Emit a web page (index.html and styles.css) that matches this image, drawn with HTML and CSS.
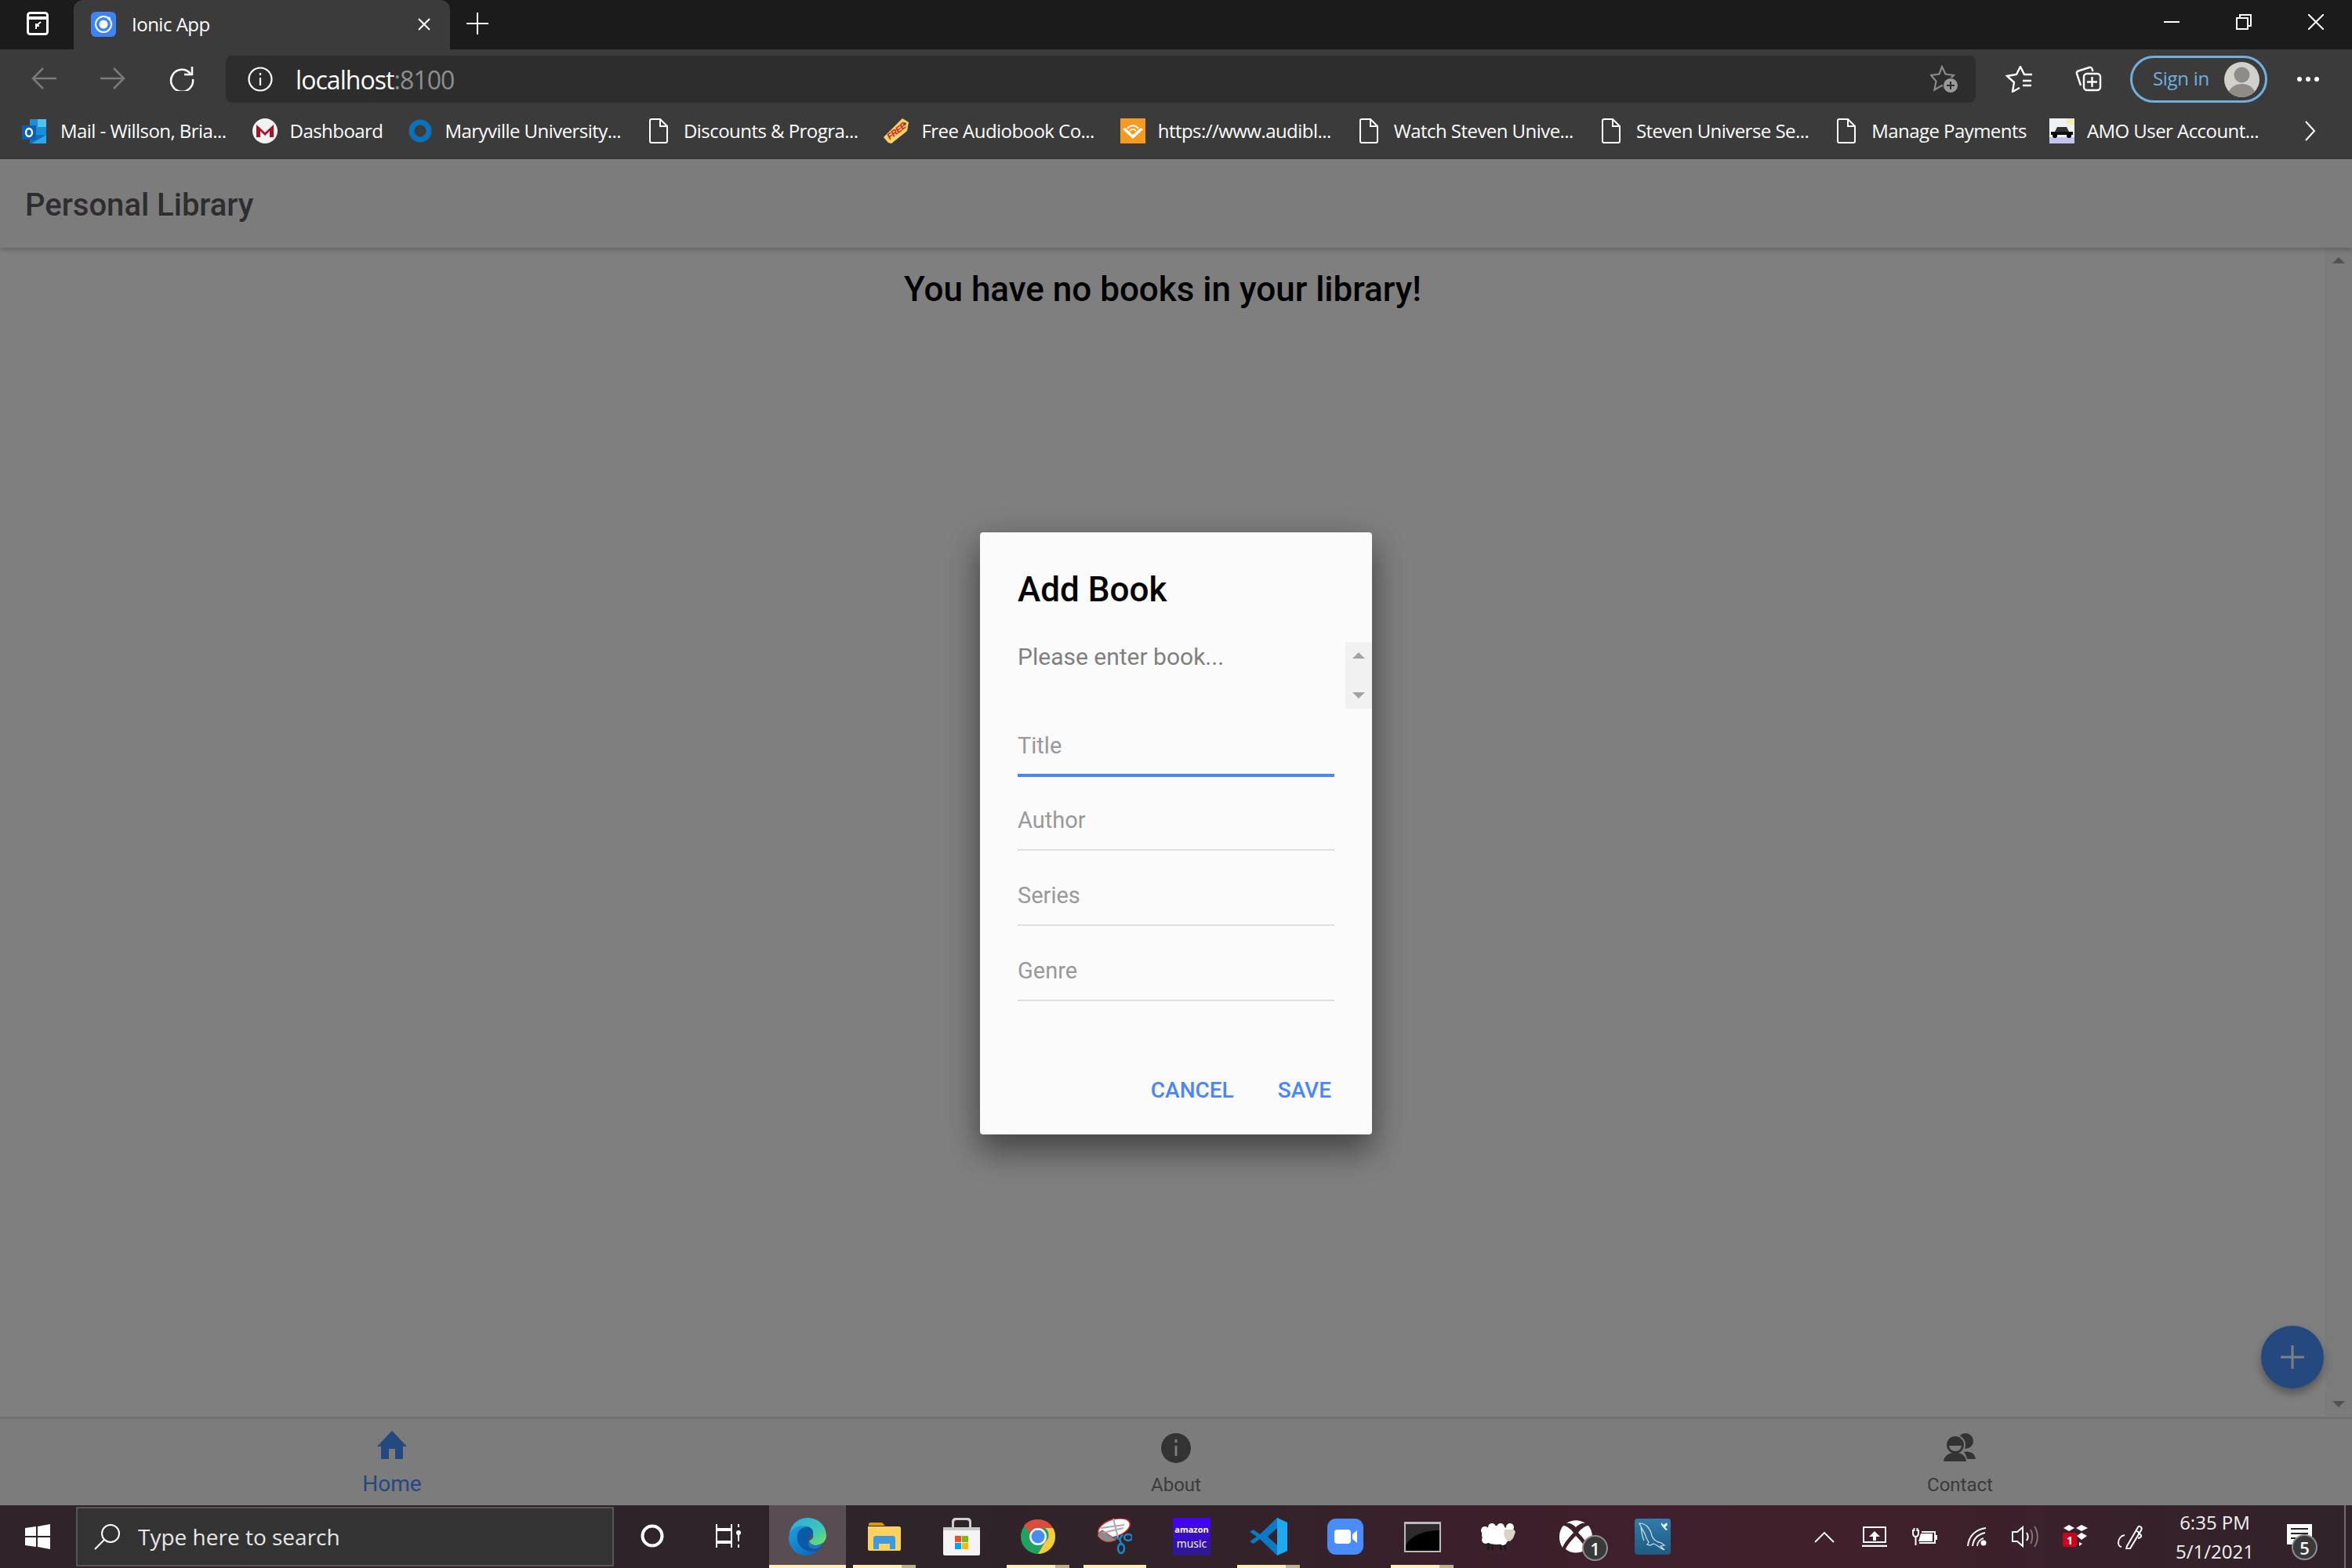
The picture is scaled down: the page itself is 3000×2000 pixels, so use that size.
FILE: index.html
```html
<!DOCTYPE html>
<html lang="en">
<head>
<meta charset="UTF-8">
<title>Ionic App</title>
<link rel="stylesheet" href="styles.css">
</head>
<body>

<!-- tab strip -->
<div class="tabstrip">
    <div class="tab-actions">
        <svg width="28" height="30" viewBox="0 0 28 30" fill="none" stroke="#fff" stroke-width="3"><rect x="1.5" y="1.5" width="25" height="27" rx="3"/><path d="M2 8h24" stroke-width="4"/><path d="M18 13l-6 5v-3M12 18h4M12 18v4" stroke-width="2"/></svg>
    </div>
    <div class="tab">
        <svg class="favicon" width="32" height="32" viewBox="0 0 32 32"><rect width="32" height="32" rx="6" fill="#3d84f7"/><circle cx="16" cy="16" r="10" fill="none" stroke="#fff" stroke-width="2"/><circle cx="16" cy="16" r="5.5" fill="#fff"/><circle cx="23" cy="8.5" r="2" fill="#fff"/></svg>
        <span class="tab-title">Ionic App</span>
        <svg class="tab-close" width="18" height="18" viewBox="0 0 18 18" stroke="#fff" stroke-width="2"><path d="M2 2l14 14M16 2L2 16"/></svg>
    </div>
    <svg class="new-tab" width="28" height="28" viewBox="0 0 28 28" stroke="#fff" stroke-width="2"><path d="M14 0v28M0 14h28"/></svg>
    <div class="win-controls">
        <div class="win-btn"><svg width="20" height="2" viewBox="0 0 20 2"><path d="M0 1h20" stroke="#fff" stroke-width="2"/></svg></div>
        <div class="win-btn"><svg width="20" height="20" viewBox="0 0 20 20" fill="none" stroke="#fff" stroke-width="2"><rect x="1" y="5" width="14" height="14"/><path d="M5 5V1h14v14h-4"/></svg></div>
        <div class="win-btn"><svg width="20" height="20" viewBox="0 0 20 20" stroke="#fff" stroke-width="2"><path d="M0 0l20 20M20 0L0 20"/></svg></div>
    </div>
</div>

<!-- toolbar -->
<div class="toolbar">
    <div class="nav-btn"><svg width="32" height="28" viewBox="0 0 32 28" fill="none" stroke="#7a7a7a" stroke-width="2.5"><path d="M15 1L2 14l13 13M2 14h30"/></svg></div>
    <div class="nav-btn"><svg width="32" height="28" viewBox="0 0 32 28" fill="none" stroke="#7a7a7a" stroke-width="2.5"><path d="M17 1l13 13-13 13M30 14H0"/></svg></div>
    <div class="nav-btn"><svg width="32" height="32" viewBox="0 0 32 32" fill="none" stroke="#fff" stroke-width="2.5"><path d="M27 10A14 14 0 1 0 30 17"/><path d="M29 1v10H19"/></svg></div>
    <div class="address">
        <svg width="32" height="32" viewBox="0 0 32 32" fill="none" stroke="#fff" stroke-width="2.2"><circle cx="16" cy="16" r="14.5"/><path d="M16 14v10M16 8v3"/></svg>
        <span class="url">localhost<span class="url-port">:8100</span></span>
        <svg class="star-add" width="36" height="36" viewBox="0 0 36 36"><path d="M15 2l4.5 9.500L30 13l-7.500 7.500 2 11-9.500-5.500-9.500 5.500 2-11L1 13l10.500-1.500z" fill="none" stroke="#8a8a8a" stroke-width="2.2"/><circle cx="26" cy="26" r="9.500" fill="#9a9a9a" stroke="#2d2d2d"/><path d="M26 21v10M21 26h10" stroke="#2d2d2d" stroke-width="2"/></svg>
    </div>
    <div class="tool-btn tool-fav"><svg width="34" height="34" viewBox="0 0 34 34" fill="none" stroke="#fff" stroke-width="2.4"><path d="M18 28l-9 5 2-12-9-8 12-2 5-10 5 10h11M22 19h11M22 25h11"/></svg></div>
    <div class="tool-btn tool-coll"><svg width="34" height="34" viewBox="0 0 34 34" fill="none" stroke="#fff" stroke-width="2.4"><path d="M7 25L2 10c-.5-2 .5-3 2-3.500L18 2c2-.5 3 .5 3.500 2l1 3"/><rect x="11" y="10" width="21" height="21" rx="4"/><path d="M21.500 14v13M15 20.500h13"/></svg></div>
    <div class="signin">
        <span class="signin-text">Sign in</span>
        <svg class="avatar" width="45" height="45" viewBox="0 0 45 45"><defs><clipPath id="avatarClip"><circle cx="22.5" cy="22.5" r="22.5"/></clipPath></defs><circle cx="22.5" cy="22.5" r="22.5" fill="#d2d0cb"/><g clip-path="url(#avatarClip)" fill="#8f8c87"><circle cx="22.5" cy="16.5" r="10"/><ellipse cx="22.5" cy="42" rx="17" ry="14"/></g></svg>
    </div>
    <div class="more"><i></i><i></i><i></i></div>
</div>

<!-- favourites bar -->
<div class="bookmarks">
    <div class="bm">
        <svg width="33" height="33" viewBox="0 0 33 33"><rect x="10" y="1" width="21" height="30" fill="#1a8fd8"/><rect x="20" y="1" width="11" height="10" fill="#50c0f0"/><path d="M10 21l21 0v11H10z" fill="#0f6fc0"/><path d="M12 32l19-11v11z" fill="#28a8ea"/><rect x="0" y="9" width="18" height="18" fill="#0a5fb5"/><ellipse cx="9" cy="18" rx="4" ry="5" fill="none" stroke="#fff" stroke-width="2.4"/></svg>
        <span>Mail - Willson, Bria...</span>
    </div>
    <div class="bm">
        <svg width="32" height="32" viewBox="0 0 32 32"><circle cx="16" cy="16" r="16" fill="#f4f1f1"/><path d="M5 24V8l11 10L27 8v16h-5v-8l-6 6-6-6v8z" fill="#a3142a"/></svg>
        <span>Dashboard</span>
    </div>
    <div class="bm">
        <svg width="30" height="32" viewBox="0 0 30 32"><circle cx="15" cy="16" r="11" fill="none" stroke="#0a72bb" stroke-width="7"/></svg>
        <span>Maryville University...</span>
    </div>
    <div class="bm">
        <svg class="doc-icon" width="24" height="32" viewBox="0 0 24 32"><path d="M3 1h11l9 9v19c0 1-1 2-2 2H3c-1 0-2-1-2-2V3c0-1 1-2 2-2zM14 1v9h9" fill="none" stroke="#fff" stroke-width="2"/></svg>
        <span>Discounts &amp; Progra...</span>
    </div>
    <div class="bm">
        <svg width="32" height="32" viewBox="0 0 32 32"><path d="M24 0l8 5-2 11L10 32l-4-1-6-7z" fill="#f9d566"/><circle cx="27" cy="7" r="2" fill="#555"/><text x="3" y="21" transform="rotate(-38 15 17)" class="free-tag">FREE</text></svg>
        <span>Free Audiobook Co...</span>
    </div>
    <div class="bm">
        <svg width="32" height="32" viewBox="0 0 32 32"><rect width="32" height="32" fill="#f79a1d"/><path d="M3 14l13 12 13-12-3-2-10 9-10-9z" fill="#fff"/><path d="M9 13c4-5 10-5 14 0M12 16c2-3 6-3 8 0" fill="none" stroke="#fff" stroke-width="2"/></svg>
        <span>https://www.audibl...</span>
    </div>
    <div class="bm">
        <svg class="doc-icon" width="24" height="32" viewBox="0 0 24 32"><path d="M3 1h11l9 9v19c0 1-1 2-2 2H3c-1 0-2-1-2-2V3c0-1 1-2 2-2zM14 1v9h9" fill="none" stroke="#fff" stroke-width="2"/></svg>
        <span>Watch Steven Unive...</span>
    </div>
    <div class="bm">
        <svg class="doc-icon" width="24" height="32" viewBox="0 0 24 32"><path d="M3 1h11l9 9v19c0 1-1 2-2 2H3c-1 0-2-1-2-2V3c0-1 1-2 2-2zM14 1v9h9" fill="none" stroke="#fff" stroke-width="2"/></svg>
        <span>Steven Universe Se...</span>
    </div>
    <div class="bm">
        <svg class="doc-icon" width="24" height="32" viewBox="0 0 24 32"><path d="M3 1h11l9 9v19c0 1-1 2-2 2H3c-1 0-2-1-2-2V3c0-1 1-2 2-2zM14 1v9h9" fill="none" stroke="#fff" stroke-width="2"/></svg>
        <span>Manage Payments</span>
    </div>
    <div class="bm bm-amo">
        <svg width="32" height="32" viewBox="0 0 32 32"><rect width="32" height="32" fill="#eef2f4"/><rect x="22" width="10" height="8" fill="#f2eeb4"/><rect y="24" width="32" height="8" fill="#c3c4ee"/><path d="M10 11h12l3 6H7z" fill="#333"/><rect x="2" y="17" width="28" height="4" fill="#111"/><circle cx="7" cy="22" r="3" fill="#000"/><circle cx="25" cy="22" r="3" fill="#000"/></svg>
        <span>AMO User Account...</span>
    </div>
    <svg class="bm-more" width="14" height="26" viewBox="0 0 14 26" fill="none" stroke="#fff" stroke-width="2"><path d="M1 1l11 12L1 25"/></svg>
</div>

<!-- the app itself, under the alert backdrop -->
<div class="page">
    <header class="app-header">Personal Library</header>
    <div class="app-body">
        <main class="app-content">
            <h3 class="empty-msg">You have no books in your library!</h3>
        </main>
        <div class="scroll-col">
            <i class="arrow-up"></i>
            <i class="arrow-down"></i>
        </div>
        <div class="fab">
            <svg width="30" height="30" viewBox="0 0 30 30" stroke="#fff" stroke-width="3"><path d="M15 0v30M0 15h30"/></svg>
        </div>
    </div>
    <nav class="app-tabs">
        <div class="app-tab selected">
            <svg width="38" height="36" viewBox="0 0 38 36"><path d="M19 0l19 20h-5v16H23V23h-8v13H5V20H0z" fill="#4a90ff"/></svg>
            <span>Home</span>
        </div>
        <div class="app-tab">
            <svg width="38" height="38" viewBox="0 0 38 38"><circle cx="19" cy="19" r="19" fill="#666"/><path d="M19 16v13M19 8v4" stroke="#f8f8f8" stroke-width="3"/></svg>
            <span>About</span>
        </div>
        <div class="app-tab">
            <svg class="contact-icon" width="42" height="36" viewBox="0 0 42 36" fill="#666"><circle cx="28" cy="10" r="10"/><path d="M26 24c8-2 14 2 15 9H30c-1-4-2-6-4-9z"/><circle cx="15" cy="15" r="12" stroke="#f8f8f8" stroke-width="2"/><path d="M7 16h16c-1 5-4 7-8 7s-7-2-8-7z" fill="#f8f8f8"/><path d="M0 36c1-7 6-11 15-11s13 4 14 11z"/></svg>
            <span>Contact</span>
        </div>
    </nav>

    <div class="backdrop">
        <div class="alert">
            <h2 class="alert-title">Add Book</h2>
            <div class="alert-message">
                Please enter book...
                <div class="mini-scroll"><i class="arrow-up"></i><i class="arrow-down"></i></div>
            </div>
            <div class="alert-inputs">
                <div class="alert-input focused">Title</div>
                <div class="alert-input">Author</div>
                <div class="alert-input">Series</div>
                <div class="alert-input">Genre</div>
            </div>
            <div class="alert-actions">
                <span>Cancel</span>
                <span>Save</span>
            </div>
        </div>
    </div>
</div>

<!-- windows taskbar -->
<div class="taskbar">
    <div class="start">
        <svg width="32" height="32" viewBox="0 0 32 32" fill="#fff"><path d="M0 5l14-2v12H0zM16 3l16-3v15H16zM0 17h14v12L0 27zM16 17h16v15l-16-3z"/></svg>
    </div>
    <div class="search">
        <svg width="34" height="34" viewBox="0 0 34 34" fill="none" stroke="#fff" stroke-width="2"><circle cx="21" cy="13" r="11"/><path d="M13 21L1 33"/></svg>
        <span>Type here to search</span>
    </div>
    <div class="cortana"><svg width="30" height="30" viewBox="0 0 30 30"><circle cx="15" cy="15" r="12.5" fill="none" stroke="#fff" stroke-width="4"/></svg></div>
    <div class="taskview"><svg width="32" height="30" viewBox="0 0 32 30" fill="none" stroke="#fff" stroke-width="2"><path d="M1 6V0M20 6V0M0 6h21M1 8h19v14H1zM1 30v-6M20 30v-6M0 24h21M29 0v4M29 26v4"/><path d="M29 8v14" stroke-width="2"/><circle cx="29" cy="11" r="3" fill="#fff" stroke="none"/></svg></div>

    <div class="task-app active">
        <svg width="48" height="48" viewBox="0 0 48 48"><defs><linearGradient id="edgeG" x1="0" y1="0" x2="1" y2="1"><stop offset="0" stop-color="#2fa8e0"/><stop offset=".6" stop-color="#3bc7b8"/><stop offset="1" stop-color="#7fe05a"/></linearGradient><linearGradient id="edgeB" x1="0" y1="0" x2="1" y2="1"><stop offset="0" stop-color="#1aa0e4"/><stop offset="1" stop-color="#0a63b4"/></linearGradient></defs><path d="M24 0C37 0 48 9 48 23c0 7-6 12-13 12-5 0-9-2-9-6 4-1 6-4 5-8C28 11 8 10 1 20 3 8 12 0 24 0z" fill="url(#edgeG)"/><path d="M1 20C5 11 15 9 23 11c-8 2-13 8-12 16 1 10 12 19 26 15C31 47 26 48 22 48 8 48 0 36 0 25z" fill="url(#edgeB)"/><path d="M23 11c6 1 9 5 8 10-4 1-6 4-5 8 0 4 4 6 9 6 2 0 7-1 9-3-2 7-7 9-7 10-14 4-25-5-26-15-1-8 4-14 12-16z" fill="#0b5aa8"/><path d="M26 29c0 4 4 6 9 6 3 0 7-1 9-4-3 7-8 10-14 8-5-1-6-6-4-10z" fill="#2a6fc0"/></svg>
    </div>
    <div class="task-app running stacked">
        <svg width="42" height="36" viewBox="0 0 42 36"><path d="M1 2c0-1 1-2 2-2h15l4 4h-21z" fill="#d99a00"/><path d="M0 5h40c1 0 2 1 2 2v27c0 1-1 2-2 2H2c-1 0-2-1-2-2z" fill="#fdd25f"/><path d="M7 34V20c0-2 1-3 3-3h22c2 0 3 1 3 3v14h-7v-7H14v7z" fill="#3f99df"/><rect x="14" y="27" width="14" height="7" fill="#fdd25f"/></svg>
    </div>
    <div class="task-app">
        <svg width="47" height="48" viewBox="0 0 47 48"><path d="M11 14V5c0-3 2-5 5-5h15c3 0 5 2 5 5v9h-3V6c0-2-1-3-3-3H17c-2 0-3 1-3 3v8z" fill="#cfcfcf"/><path d="M0 12h47v34c0 1-1 2-2 2H2c-1 0-2-1-2-2z" fill="#f4f4f4"/><rect y="12" width="47" height="4" fill="#c9c9c9"/><rect x="15" y="23" width="8" height="8" fill="#f25022"/><rect x="24" y="23" width="8" height="8" fill="#7fba00"/><rect x="15" y="32" width="8" height="8" fill="#00a4ef"/><rect x="24" y="32" width="8" height="8" fill="#ffb900"/></svg>
    </div>
    <div class="task-app running stacked">
        <svg width="44" height="44" viewBox="0 0 44 44"><circle cx="22" cy="22" r="22" fill="#1ea362"/><path d="M22 0a22 22 0 0 1 19 11H22a11 11 0 0 0-10 7L4 8a22 22 0 0 1 18-8z" fill="#db4b3e"/><path d="M41 11a22 22 0 0 1-19 33l9-15a11 11 0 0 0 0-18z" fill="#fdc93d"/><circle cx="22" cy="22" r="11" fill="#fff"/><circle cx="22" cy="22" r="8.5" fill="#4a8bf0"/></svg>
    </div>
    <div class="task-app running">
        <svg width="44" height="46" viewBox="0 0 44 46"><ellipse cx="21" cy="12" rx="21" ry="11" transform="rotate(-18 21 12)" fill="#fff" stroke="#d02a2a" stroke-width="1.5"/><path d="M0 22c6 8 14 10 24 5L6 15C2 17 0 19 0 22z" fill="#8c8a8c" stroke="#c23030"/><path d="M20 0l6 24M4 12l30-4M7 18l26-6" stroke="#aaa" stroke-width="2" fill="none"/><path d="M21 24l7 2 3 8M28 26l4-6" stroke="#1588c8" stroke-width="2.5" fill="none"/><ellipse cx="30" cy="38" rx="4" ry="6" fill="none" stroke="#1588c8" stroke-width="2.5"/><ellipse cx="39" cy="24" rx="5" ry="4" fill="none" stroke="#1588c8" stroke-width="2.5"/></svg>
    </div>
    <div class="task-app">
        <div class="amazon"><span>amazon</span><b>music</b></div>
    </div>
    <div class="task-app running stacked">
        <svg width="48" height="48" viewBox="0 0 48 48"><path d="M35 0l13 6v36l-13 6-22-21-8 6-5-3 9-6-9-6 5-3 8 6zM35 13L23 24l12 11z" fill="#0a7ac4"/><path d="M35 0l13 6v36l-13 6z" fill="#21a8ee"/></svg>
    </div>
    <div class="task-app">
        <svg width="46" height="46" viewBox="0 0 46 46"><rect width="46" height="46" rx="11" fill="#4a8cfc"/><rect x="9" y="14" width="21" height="18" rx="4" fill="#fff"/><path d="M32 20l6-5v16l-6-5z" fill="#fff"/></svg>
    </div>
    <div class="task-app running stacked">
        <svg width="47" height="39" viewBox="0 0 47 39"><rect width="47" height="39" fill="#b9b9c0"/><rect x="2" y="3" width="43" height="34" fill="#000"/><path d="M2 3h43v8C28 11 10 16 2 30z" fill="#2c2c2c"/></svg>
    </div>
    <div class="task-app">
        <svg width="46" height="34" viewBox="0 0 46 34"><path d="M8 25v9h3v-9zM13 25v9h3v-9zM24 25v9h3v-9zM29 25v9h3v-9z" fill="#1c1a1c"/><ellipse cx="20" cy="15" rx="19" ry="12" fill="#fff"/><circle cx="5" cy="9" r="5" fill="#fff"/><circle cx="14" cy="5" r="5" fill="#fff"/><circle cx="25" cy="5" r="5" fill="#fff"/><circle cx="6" cy="21" r="5" fill="#fff"/><circle cx="28" cy="23" r="5" fill="#fff"/><circle cx="37" cy="5" r="5" fill="#fff"/><path d="M30 8h12l2 3-3 8-4 4-5-2-3-7z" fill="#d9d3c8"/></svg>
    </div>
    <div class="task-app badge-host">
        <svg width="42" height="42" viewBox="0 0 42 42" fill="#fff"><path d="M9 4A21 21 0 0 1 33 4c-4-1-8 1-12 5C17 5 13 3 9 4zM5 7c5 0 11 6 13 9-5 5-12 13-14 19C-2 26-1 14 5 7zM37 7c6 7 7 19 1 28-2-6-9-14-14-19 2-3 8-9 13-9zM21 20c6 6 11 12 13 17a21 21 0 0 1-26 0c2-5 7-11 13-17z"/></svg>
        <span class="tray-badge badge-xbox">1</span>
    </div>
    <div class="task-app">
        <svg width="46" height="46" viewBox="0 0 46 46"><defs><linearGradient id="mysqlG" x1="0" y1="0" x2="0" y2="1"><stop offset="0" stop-color="#2f7cab"/><stop offset="1" stop-color="#1f5a80"/></linearGradient></defs><rect width="46" height="46" rx="4" fill="url(#mysqlG)"/><path d="M6 6c8 0 14 6 16 16 2 5 6 8 12 9l4 3-5 1 5 5c-6-2-9-7-14-8l-4 2-4-1 2-3-3-5c-1-5-4-9-6-13zM8 10c1 7 1 12 4 18" fill="none" stroke="#cfe0ea" stroke-width="1.2"/><path d="M34 5l3 3 4-3 1 3-3 3 3 3-2 1-3-3-3-4z" fill="#e8f0f4"/></svg>
    </div>

    <div class="tray">
        <div class="tray-item"><svg width="26" height="15" viewBox="0 0 26 15" fill="none" stroke="#fff" stroke-width="1.8"><path d="M1 14L13 2l12 12"/></svg></div>
        <div class="tray-item"><svg width="32" height="26" viewBox="0 0 32 26" fill="none" stroke="#fff" stroke-width="2"><rect x="2" y="1" width="28" height="19"/><path d="M0 25h32" stroke-width="2.5"/><path d="M16 6l-7 7h5v5h4v-5h5z" fill="#fff" stroke="none"/></svg></div>
        <div class="tray-item"><svg width="32" height="22" viewBox="0 0 32 22" fill="none" stroke="#fff" stroke-width="2"><path d="M1 2v4c0 3 1.500 5 3.500 5S8 9 8 6V2M4.500 11v11M2.500 0v4M6.500 0v4"/><path d="M9 19h20V5H12"/><path d="M29 9h3v6h-3z" fill="#fff" stroke="none"/><path d="M8 17l3-10h15v10z" fill="#fff" stroke="none"/></svg></div>
        <div class="tray-item wifi-item"><svg width="26" height="24" viewBox="0 0 26 24" fill="none" stroke="#fff" stroke-width="2"><path d="M1 24C2 12 10 3 24 1M7 24C8 15 14 9 23 7"/><path d="M13 24c0-5 4-9 8-10" stroke="#ddd"/><circle cx="21" cy="20" r="3.5" fill="#fff" stroke="none"/></svg></div>
        <div class="tray-item"><svg width="34" height="28" viewBox="0 0 34 28" fill="none" stroke="#fff" stroke-width="2"><path d="M1 8h6l7-6v24l-7-6H1z"/><path d="M19 9c2 3 2 7 0 10"/><path d="M24 5c3 5 3 13 0 18M29 1c5 7 5 19 0 26" stroke="#7f7478"/></svg></div>
        <div class="tray-item"><svg width="32" height="30" viewBox="0 0 32 30"><path d="M8 0l7 4-7 4-7-4zM24 0l8 4-8 4-7-4zM24 10l7 4-7 5-6-5zM21 22l4 2-4 3z" fill="#fff"/><rect y="10" width="18" height="18" rx="3" fill="#d0021b"/><text x="9" y="25" class="dropbox-count">1</text></svg></div>
        <div class="tray-item pen-item"><svg width="32" height="32" viewBox="0 0 32 32" fill="none" stroke="#fff" stroke-width="2"><path d="M12 28L26 4c1-2 3-1 4 0s1 2 0 4L16 31l-5 1zM23 8l5 3"/><path d="M9 14c-5 1-8 5-8 10 0 3 2 5 4 5M26 12c3 1 5 2 4 4-1 1-2 2-4 2"/></svg></div>
        <div class="clock"><span>6:35 PM</span><span>5/1/2021</span></div>
        <div class="notify">
            <svg width="32" height="32" viewBox="0 0 32 32"><path d="M0 0h32v26H15l-2 4-3-4H0z" fill="#fff"/><path d="M5 6h22M5 12h22M5 18h22" stroke="#2d2228" stroke-width="2"/></svg>
            <span class="tray-badge badge-notify">5</span>
        </div>
        <div class="show-desktop"></div>
    </div>
</div>

</body>
</html>
```

FILE: styles.css
```css
* {
    box-sizing: border-box;
}
html, body {
    margin: 0;
    width: 3000px;
    height: 2000px;
    overflow: hidden;
}
body {
    display: flex;
    flex-direction: column;
    font-family: "Open Sans", "Noto Sans", sans-serif;
    color: #fff;
}
svg {
    display: block;
    flex: none;
}

/* tab strip */
.tabstrip {
    height: 63px;
    background-color: #1b1b1b;
    display: flex;
    align-items: center;
}
.tab-actions {
    width: 94px;
    display: flex;
    padding-left: 34px;
    margin-bottom: 3px;
}
.tab {
    width: 480px;
    height: 63px;
    background-color: #3b3b3b;
    border-radius: 12px 12px 0 0;
    display: flex;
    align-items: center;
    padding: 0 24px 2px 22px;
}
.tab-title {
    margin-left: 20px;
    font-size: 24px;
    letter-spacing: -0.5px;
    flex: 1;
}
.new-tab {
    margin: 0 0 3px 21px;
}
.win-controls {
    margin-left: auto;
    display: flex;
    margin-bottom: 7px;
}
.win-btn {
    width: 92px;
    height: 56px;
    display: flex;
    align-items: center;
    justify-content: center;
}

/* toolbar */
.toolbar {
    height: 68px;
    background-color: #3b3b3b;
    display: flex;
    align-items: flex-end;
    padding-left: 12px;
}
.nav-btn {
    width: 88px;
    height: 68px;
    display: flex;
    align-items: center;
    justify-content: center;
    padding-top: 6px;
}
.address {
    width: 2232px;
    margin-left: 12px;
    height: 60px;
    background-color: #2d2d2d;
    border-radius: 8px;
    display: flex;
    align-items: center;
    padding: 0 22px 0 28px;
}
.url {
    margin-left: 29px;
    font-size: 32px;
    letter-spacing: -0.95px;
}
.url-port {
    color: #8f8f8f;
}
.star-add {
    margin-left: auto;
}
.tool-btn {
    height: 60px;
    display: flex;
    align-items: center;
    justify-content: center;
}
.tool-fav {
    margin-left: 38px;
    width: 34px;
}
.tool-coll {
    margin-left: 55px;
    width: 34px;
}
.signin {
    margin-left: 36px;
    width: 175px;
    height: 60px;
    border: 3px solid #6fb0e0;
    border-radius: 30px;
    display: flex;
    align-items: center;
    padding: 0 7px 0 26px;
}
.signin-text {
    color: #6fb0e0;
    font-size: 24px;
    letter-spacing: -0.3px;
    margin-bottom: 3px;
}
.avatar {
    margin-left: auto;
}
.more {
    margin-left: 38px;
    height: 60px;
    display: flex;
    align-items: center;
    gap: 5px;
}
.more i {
    width: 6px;
    height: 6px;
    border-radius: 50%;
    background-color: #fff;
}

/* favourites bar */
.bookmarks {
    height: 72px;
    background-color: #3b3b3b;
    display: flex;
    align-items: center;
    padding: 0 0 0 28px;
}
.bm {
    display: flex;
    align-items: center;
    gap: 16px;
    margin-right: 33px;
    font-size: 24px;
    letter-spacing: -0.55px;
    white-space: nowrap;
}
.bm span {
    margin-bottom: 2px;
}
.doc-icon {
    margin: 0 4px 0 3px;
}
.bm-amo {
    margin-left: -4px;
}
.bm-more {
    margin-left: 26px;
}
.free-tag {
    font: italic 700 11px "Liberation Sans", sans-serif;
    fill: #e0101c;
}

/* app */
.page {
    position: relative;
    flex: 1;
    display: flex;
    flex-direction: column;
    color: #000;
    font-family: Roboto, sans-serif;
    background-color: #fff;
}
.app-header {
    height: 113px;
    background-color: #f8f8f8;
    color: #5c5c5c;
    font-size: 40px;
    font-weight: 500;
    display: flex;
    align-items: center;
    padding: 3px 0 0 32px;
    box-shadow: 0 3px 6px rgba(0, 0, 0, 0.2);
    z-index: 1;
}
.app-body {
    position: relative;
    flex: 1;
    display: flex;
}
.app-content {
    flex: 1;
}
.empty-msg {
    margin: 26px 0 0;
    font-size: 44px;
    font-weight: 500;
    text-align: center;
    line-height: 54px;
}
.scroll-col {
    width: 34px;
    background-color: #f6f6f6;
    display: flex;
    flex-direction: column;
    justify-content: space-between;
    align-items: center;
    padding: 12px 0;
}
.arrow-up {
    width: 0;
    height: 0;
    border-left: 8px solid transparent;
    border-right: 8px solid transparent;
    border-bottom: 8px solid #a3a3a3;
}
.arrow-down {
    width: 0;
    height: 0;
    border-left: 8px solid transparent;
    border-right: 8px solid transparent;
    border-top: 8px solid #a3a3a3;
}
.fab {
    position: absolute;
    right: 36px;
    bottom: 36px;
    width: 80px;
    height: 80px;
    border-radius: 50%;
    background-color: #4a90ff;
    display: flex;
    align-items: center;
    justify-content: center;
    box-shadow: 0 6px 12px rgba(0, 0, 0, 0.35);
}
.app-tabs {
    height: 113px;
    background-color: #f8f8f8;
    border-top: 3px solid #e4e4e4;
    display: flex;
}
.app-tab {
    flex: 1;
    display: flex;
    flex-direction: column;
    align-items: center;
    color: #777;
    font-size: 24px;
    padding-top: 18px;
    gap: 14px;
    line-height: 28px;
}
.app-tab.selected {
    color: #4a90ff;
    font-size: 28px;
    padding-top: 15px;
    gap: 18px;
}
.contact-icon {
    margin-bottom: 2px;
}
.backdrop {
    position: absolute;
    inset: 0;
    background-color: rgba(0, 0, 0, 0.5);
    z-index: 2;
    display: flex;
    align-items: center;
    justify-content: center;
    padding-top: 3px;
}
.alert {
    width: 500px;
    height: 768px;
    background-color: #fbfbfb;
    border-radius: 4px;
    box-shadow: 0 24px 38px rgba(0, 0, 0, 0.3), 0 10px 46px rgba(0, 0, 0, 0.24);
    display: flex;
    flex-direction: column;
    padding-top: 50px;
}
.alert-title {
    margin: 0;
    padding: 0 48px;
    font-size: 44px;
    font-weight: 500;
    line-height: 46px;
}
.alert-message {
    position: relative;
    height: 85px;
    margin-top: 44px;
    padding: 0 48px;
    font-size: 30px;
    line-height: 38px;
    color: #808080;
}
.mini-scroll {
    position: absolute;
    right: 0;
    top: 0;
    width: 34px;
    height: 85px;
    background-color: #f1f1f1;
    display: flex;
    flex-direction: column;
    justify-content: space-between;
    align-items: center;
    padding: 13px 0;
}
.alert-inputs {
    padding: 0 48px;
    margin-top: 7px;
    display: flex;
    flex-direction: column;
    gap: 16px;
}
.alert-input {
    height: 80px;
    border-bottom: 2px solid #dedede;
    color: #999;
    font-size: 29px;
    display: flex;
    align-items: center;
    padding-top: 3px;
}
.alert-input.focused {
    border-bottom: 4px solid #4a86f8;
    margin-bottom: -2px;
}
.alert-actions {
    margin-top: auto;
    padding: 0 52px 38px 0;
    display: flex;
    justify-content: flex-end;
    gap: 56px;
    color: #4a86f8;
    font-size: 28px;
    font-weight: 500;
    text-transform: uppercase;
    line-height: 36px;
}

/* taskbar */
.taskbar {
    height: 80px;
    background: linear-gradient(90deg, #31232a 0%, #2e2429 40%, #35222a 55%, #3f1f2b 68%, #3f202b 80%, #30232a 100%);
    display: flex;
}
.start {
    width: 97px;
    display: flex;
    align-items: center;
    justify-content: center;
    padding-right: 2px;
}
.search {
    width: 686px;
    margin: 2px 0;
    background-color: #333;
    border: 2px solid #575757;
    display: flex;
    align-items: center;
    padding-left: 21px;
    gap: 22px;
    font-size: 28px;
    color: #e6e6e6;
}
.cortana {
    width: 98px;
    display: flex;
    align-items: center;
    justify-content: center;
    padding-bottom: 2px;
}
.taskview {
    width: 100px;
    display: flex;
    align-items: center;
    justify-content: center;
    padding: 0 4px 2px 0;
}
.task-app {
    position: relative;
    width: 98px;
    display: flex;
    align-items: center;
    justify-content: center;
}
.task-app.active {
    background-color: #5a4c53;
}
.task-app.active::after,
.task-app.running::after {
    content: "";
    position: absolute;
    left: 9px;
    right: 9px;
    bottom: 0;
    height: 4px;
    background-color: #ffefb5;
}
.task-app.active::after {
    left: 0;
    right: 0;
}
.task-app.stacked::after {
    background: linear-gradient(90deg, #ffefb5 78%, #bdb18b 78%);
}
.amazon {
    width: 48px;
    height: 48px;
    background: linear-gradient(180deg, #4400ff, #2d1a8a);
    display: flex;
    flex-direction: column;
    align-items: center;
    justify-content: center;
    line-height: 14px;
}
.amazon span {
    font-size: 11px;
    font-weight: 700;
    margin-bottom: 4px;
}
.amazon b {
    font-size: 14px;
    font-weight: 400;
}
.tray-badge {
    position: absolute;
    width: 33px;
    height: 33px;
    border-radius: 50%;
    background-color: #3a3a3a;
    border: 2px solid #8d8d8d;
    display: flex;
    align-items: center;
    justify-content: center;
    font-size: 22px;
    font-weight: 600;
}
.badge-xbox {
    left: 57px;
    top: 38px;
}
.badge-notify {
    left: 16px;
    top: 37px;
}
.tray {
    margin-left: auto;
    display: flex;
    padding-right: 8px;
}
.tray-item {
    width: 64px;
    display: flex;
    align-items: center;
    justify-content: center;
}
.wifi-item {
    padding-left: 6px;
}
.pen-item {
    padding-left: 12px;
}
.dropbox-count {
    font: 700 14px "Open Sans", sans-serif;
    fill: #fff;
    text-anchor: middle;
}
.clock {
    width: 164px;
    display: flex;
    flex-direction: column;
    align-items: center;
    justify-content: center;
    gap: 10px;
    font-size: 24px;
    line-height: 27px;
    color: #f2f2f2;
}
.notify {
    position: relative;
    width: 56px;
    display: flex;
    align-items: center;
    justify-content: center;
    padding-right: 4px;
}
.show-desktop {
    width: 29px;
    border-right: 2px solid #77686d;
}
```
